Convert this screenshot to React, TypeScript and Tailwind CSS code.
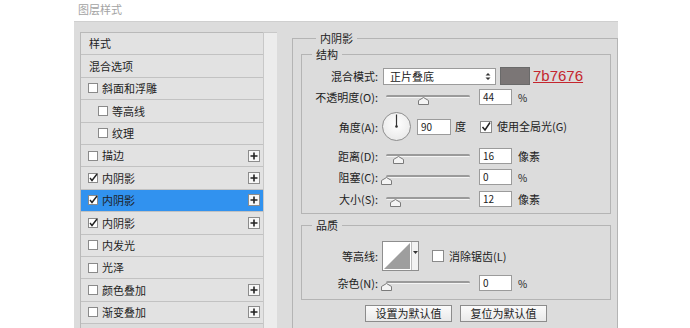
import React from "react";

const font = { fontFamily: '"Noto Sans CJK SC", "Liberation Sans", sans-serif' };

const Box = ({ checked = false }: { checked?: boolean }) => (
  <svg width="10" height="10" viewBox="0 0 10 10" className="shrink-0">
    <rect x="0.5" y="0.5" width="9" height="9" fill="#fff" stroke="#8a8a8a" />
    {checked && <path d="M2 5 L4 7.5 L9 1" fill="none" stroke="#222" strokeWidth="1.4" />}
  </svg>
);

const Plus = () => (
  <div className="w-[12px] h-[12px] border border-[#8c8c8c] bg-[#f7f7f7] flex items-center justify-center">
    <svg width="8" height="8" viewBox="0 0 8 8">
      <path d="M4 0.5 V7.5 M0.5 4 H7.5" stroke="#222" strokeWidth="1.6" />
    </svg>
  </div>
);

type Row = { label: string; box?: boolean; checked?: boolean; indent?: boolean; plus?: boolean; active?: boolean };

const rows: Row[] = [
  { label: "样式" },
  { label: "混合选项" },
  { label: "斜面和浮雕", box: true },
  { label: "等高线", box: true, indent: true },
  { label: "纹理", box: true, indent: true },
  { label: "描边", box: true, plus: true },
  { label: "内阴影", box: true, checked: true, plus: true },
  { label: "内阴影", box: true, checked: true, plus: true, active: true },
  { label: "内阴影", box: true, checked: true, plus: true },
  { label: "内发光", box: true },
  { label: "光泽", box: true },
  { label: "颜色叠加", box: true, plus: true },
  { label: "渐变叠加", box: true, plus: true },
];

const Slider = ({ pos }: { pos: number }) => (
  <div className="relative w-[84px] h-[16px] shrink-0">
    <div className="absolute left-0 right-0 top-[6px] h-[3px] rounded-full bg-[#9a9a9a] border-b border-[#f4f4f4]" />
    <svg className="absolute top-[8px]" style={{ left: pos - 5 }} width="11" height="8" viewBox="0 0 11 8">
      <path d="M0.5 7.5 V3.5 L5.5 0.5 L10.5 3.5 V7.5 Z" fill="#f4f4f4" stroke="#7a7a7a" />
    </svg>
  </div>
);

const Input = ({ value, w = "w-[33px]" }: { value: string; w?: string }) => (
  <div className={`${w} h-[16px] shrink-0 bg-white border border-[#9b9b9b] pl-[3px] text-[10px] leading-[14px] text-[#222]`}>{value}</div>
);

const Label = ({ children }: { children: React.ReactNode }) => (
  <div className="w-[76px] shrink-0 text-right text-[11px] text-[#222] leading-[14px]">{children}</div>
);

export default function App() {
  return (
    <div className="w-[690px] h-[328px] bg-white overflow-hidden" style={font}>
      <div className="h-[21px] pl-[78px] pt-[2px] text-[11px] leading-[14px] text-[#a3a3a3]">图层样式</div>
      <div className="ml-[74px] w-[544px] h-[307px] bg-[#dcdcdc] flex items-start border-t border-[#cfcfcf]">
        {/* left list */}
        <div className="ml-[6px] mt-[10px] flex">
          <div className="w-[183px] border-t border-l border-[#b9b9b9]">
            {rows.map((r, i) => (
              <div
                key={i}
                className={`h-[22.4px] flex items-center pr-[3px] border-b border-[#c2c2c2] text-[11px] text-[#1e1e1e] ${
                  r.active ? "bg-[#3192ef]" : "bg-[#e2e2e2]"
                } ${r.indent ? "pl-[17px]" : "pl-[7px]"}`}
              >
                {r.box && <Box checked={r.checked} />}
                <span className={r.box ? "ml-[4px]" : "ml-[1px]"}>{r.label}</span>
                <div className="flex-1" />
                {r.plus && <Plus />}
              </div>
            ))}
          </div>
          <div className="w-[14px] h-[300px] bg-[#ececec] border-l border-[#c8c8c8] border-t border-[#b9b9b9]" />
        </div>

        {/* right panel */}
        <fieldset className="ml-[15px] mt-[9px] w-[326px] border border-[#b4b4b4] pl-[8px] pr-[6px] h-[320px]">
          <legend className="ml-[15px] px-1 text-[11px] leading-[14px] text-[#222]">内阴影</legend>

          <fieldset className="mt-[2px] w-[310px] border border-[#b4b4b4] pb-[6px]">
            <legend className="ml-[10px] px-1 text-[11px] leading-[14px] text-[#222]">结构</legend>

            <div className="mt-[6px] flex items-center h-[18px]">
              <Label>混合模式:</Label>
              <div className="ml-[5px] w-[113px] h-[17px] bg-white border border-[#9b9b9b] flex items-center pl-[6px] pr-[4px] text-[11px] text-[#222]">
                <span>正片叠底</span>
                <span className="flex-1" />
                <svg width="6" height="9" viewBox="0 0 6 9">
                  <path d="M0.5 3.5 L3 1 L5.5 3.5 Z M0.5 5.5 L3 8 L5.5 5.5 Z" fill="#333" />
                </svg>
              </div>
              <div className="ml-[4px] w-[30px] h-[18px] bg-[#7b7676] border border-[#6a6a6a]" />
              <span className="ml-[3px] text-[15px] leading-[18px] text-[#c4262e] underline" style={{ fontFamily: '"Liberation Sans", sans-serif' }}>
                7b7676
              </span>
            </div>

            <div className="mt-[4px] flex items-center h-[16px]">
              <Label>不透明度(O):</Label>
              <div className="ml-[8px]"><Slider pos={37} /></div>
              <div className="ml-[9px]"><Input value="44" /></div>
              <span className="ml-[6px] text-[10px] text-[#222]">%</span>
            </div>

            <div className="mt-[7px] flex items-center h-[29px]">
              <Label>角度(A):</Label>
              <div className="ml-[4px] w-[29px] h-[29px] rounded-full border border-[#8e8e8e] bg-[radial-gradient(circle_at_50%_40%,#ffffff,#e4e4e4)] relative shrink-0">
                <svg className="absolute left-0 top-0" width="27" height="27" viewBox="0 0 27 27">
                  <path d="M13.5 1.5 V13.5" stroke="#333" strokeWidth="1.2" />
                  <circle cx="13.5" cy="13.5" r="1.3" fill="#333" />
                </svg>
              </div>
              <div className="ml-[6px]"><Input value="90" w="w-[34px]" /></div>
              <span className="ml-[4px] text-[11px] text-[#222]">度</span>
              <div className="ml-[14px] w-[12px] h-[12px] bg-white border border-[#8a8a8a] flex items-center justify-center">
                <svg width="10" height="10" viewBox="0 0 10 10">
                  <path d="M1.5 5 L4 8 L9 0.5" fill="none" stroke="#222" strokeWidth="1.5" />
                </svg>
              </div>
              <span className="ml-[5px] text-[11px] text-[#222]">使用全局光(G)</span>
            </div>

            <div className="mt-[7px] flex items-center h-[16px]">
              <Label>距离(D):</Label>
              <div className="ml-[8px]"><Slider pos={12} /></div>
              <div className="ml-[9px]"><Input value="16" /></div>
              <span className="ml-[6px] text-[11px] text-[#222]">像素</span>
            </div>

            <div className="mt-[5px] flex items-center h-[16px]">
              <Label>阻塞(C):</Label>
              <div className="ml-[8px]"><Slider pos={0} /></div>
              <div className="ml-[9px]"><Input value="0" /></div>
              <span className="ml-[6px] text-[10px] text-[#222]">%</span>
            </div>

            <div className="mt-[6px] flex items-center h-[16px]">
              <Label>大小(S):</Label>
              <div className="ml-[8px]"><Slider pos={9} /></div>
              <div className="ml-[9px]"><Input value="12" /></div>
              <span className="ml-[6px] text-[11px] text-[#222]">像素</span>
            </div>
          </fieldset>

          <fieldset className="mt-[4px] w-[310px] border border-[#b4b4b4] pb-[8px]">
            <legend className="ml-[10px] px-1 text-[11px] leading-[14px] text-[#222]">品质</legend>

            <div className="mt-[9px] flex items-center h-[30px]">
              <Label>等高线:</Label>
              <div className="ml-[4px] w-[37px] h-[30px] border border-[#8e8e8e] bg-white flex shrink-0">
                <svg width="28" height="28" viewBox="0 0 28 28">
                  <path d="M1 27 L27 1 V27 Z" fill="#9e9e9e" />
                </svg>
                <div className="w-[7px] border-l border-[#bdbdbd] bg-[#f2f2f2] flex items-start justify-center pt-[9px]">
                  <svg width="5" height="3" viewBox="0 0 5 3">
                    <path d="M0 0 H5 L2.5 3 Z" fill="#333" />
                  </svg>
                </div>
              </div>
              <div className="ml-[13px] w-[12px] h-[12px] bg-white border border-[#8a8a8a]" />
              <span className="ml-[5px] text-[11px] text-[#222]">消除锯齿(L)</span>
            </div>

            <div className="mt-[4px] flex items-center h-[16px]">
              <Label>杂色(N):</Label>
              <div className="ml-[8px]"><Slider pos={0} /></div>
              <div className="ml-[9px]"><Input value="0" /></div>
              <span className="ml-[6px] text-[10px] text-[#222]">%</span>
            </div>
          </fieldset>

          <div className="mt-[5px] flex justify-center gap-[8px]">
            <div className="w-[87px] h-[17px] border border-[#8c8c8c] bg-[linear-gradient(#fbfbfb,#e9e9e9)] text-center text-[11px] leading-[15px] text-[#222]">
              设置为默认值
            </div>
            <div className="w-[87px] h-[17px] border border-[#8c8c8c] bg-[linear-gradient(#fbfbfb,#e9e9e9)] text-center text-[11px] leading-[15px] text-[#222]">
              复位为默认值
            </div>
          </div>
        </fieldset>
      </div>
    </div>
  );
}
